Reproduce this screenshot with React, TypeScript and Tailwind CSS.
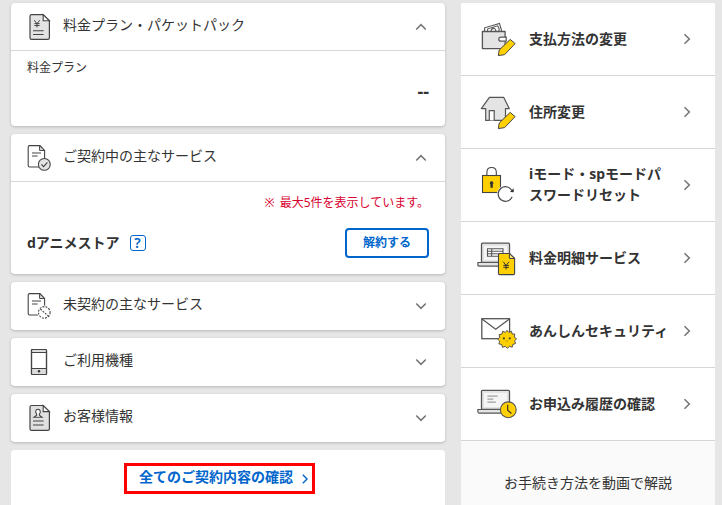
import { useState, type ReactNode } from "react";

const Chevron = ({ className }: { className: string }) => (
  <svg viewBox="0 0 16 16" fill="none" stroke="currentColor" strokeWidth="1.6" className={className} aria-hidden="true">
    <path d="M5.5 3.2 10.3 8l-4.8 4.8" />
  </svg>
);

const Pencil = () => (
  <path d="M21.3 36.6 22.2 31.1 33.2 20.4 38.1 24.6 27.7 35.6Z" fill="#ffd000" stroke="#444" strokeLinejoin="round" />
);

const icon = "h-7 w-6 shrink-0";
const menuIcon = "size-10 shrink-0";

const PlanIcon = () => (
  <svg viewBox="0 0 24 28" fill="none" stroke="#444" className={icon} aria-hidden="true">
    <path d="M4.5 1.7H16.2L22.4 7.8V24.8Q22.4 26.4 20.8 26.4H4.6Q3 26.4 3 24.8V3.3Q3 1.7 4.5 1.7Z" fill="#e4e4e4" strokeWidth="1.2" />
    <path d="M16.2 1.7V7.8H22.4Z" fill="#fff" strokeWidth="1.1" />
    <path d="m7.3 7.2 2.7 3.6 2.7-3.6M10 10.8v3.7M7.4 10.6h5.2M7.4 12.5h5.2" />
    <path d="M6 17.7h10.6M6 21.5h10.6" strokeWidth="1.1" />
  </svg>
);

const DocOutline = () => (
  <>
    <path d="M2.6 1.6H13L17.6 6.4V21.5Q17.6 23 16 23H2.6Q1.2 23 1.2 21.5V3Q1.2 1.6 2.6 1.6Z" fill="#fff" strokeWidth="1.1" />
    <path d="M12.6 1.8V6.5H17.4Z" fill="#e0e0e0" strokeWidth="1" />
    <path d="M5 9h9M5 12h5.6" />
  </>
);

const ContractIcon = () => (
  <svg viewBox="0 0 24 28" fill="none" stroke="#444" className={icon} aria-hidden="true">
    <DocOutline />
    <circle cx="17.3" cy="20.4" r="5.9" fill="#e4e4e4" strokeWidth="1.1" />
    <path d="m14.4 20.3 2.2 2.3 3.8-4.3" strokeWidth="1.1" />
  </svg>
);

const UncontractedIcon = () => (
  <svg viewBox="0 0 24 28" fill="none" stroke="#444" className={icon} aria-hidden="true">
    <DocOutline />
    <circle cx="17.3" cy="20.4" r="5.9" fill="#fff" stroke="#fff" strokeWidth="2" />
    <circle cx="17.3" cy="20.4" r="5.8" strokeWidth="1.1" strokeDasharray="1.9 1.2" />
    <path d="m13.4 17 7.8 7" strokeWidth="1.1" strokeDasharray="1.9 1.2" />
  </svg>
);

const PhoneIcon = () => (
  <svg viewBox="0 0 24 28" fill="none" stroke="#444" className={icon} aria-hidden="true">
    <rect x="4.5" y="1.5" width="15" height="25" rx="1" fill="#fff" strokeWidth="1.2" />
    <path d="M5 2h14v2.4H5zM5 20.6h14V26H5z" fill="#dcdcdc" stroke="none" />
    <path d="M4.5 4.5h15M4.5 20.5h15" />
    <circle cx="12" cy="23.3" r="1.2" fill="#333" stroke="none" />
    <rect x="4.5" y="1.5" width="15" height="25" rx="1" strokeWidth="1.2" />
  </svg>
);

const CustomerIcon = () => (
  <svg viewBox="0 0 24 28" fill="none" stroke="#444" className={icon} aria-hidden="true">
    <path d="M4.5 1.5H16.2L22.4 7.6V24.8Q22.4 26.4 20.8 26.4H4.6Q3 26.4 3 24.8V3Q3 1.5 4.5 1.5Z" fill="#e0e0e0" strokeWidth="1.2" />
    <path d="M16.2 1.5V7.6H22.4Z" fill="#fff" strokeWidth="1.1" />
    <path d="M9.7 10.2Q8.5 8.8 8.7 7.3 9 5.3 11 5.3 13 5.3 13.3 7.3 13.5 8.8 12.3 10.2V11.2L15 13.2H7L9.7 11.2Z" fill="#fff" strokeWidth="1.1" />
    <path d="M6 17h10.6M6 21h10.6" strokeWidth="1.2" />
  </svg>
);

const WalletIcon = () => (
  <svg viewBox="0 0 40 40" fill="none" stroke="#555" className={menuIcon} aria-hidden="true">
    <path d="M7.6 12V8.8L22.5 4.4 24.7 12" fill="#fff" strokeWidth="1.1" />
    <path d="M10.5 12 10.8 9.8 20.7 6.8 22 9.5V12M14 12Q14.5 9 17.3 9.4 19 10 18.9 12" strokeWidth="1.1" />
    <path d="M5.4 12.5H28.1V29.6H5.4Z" fill="#e4e4e4" strokeWidth="1.3" strokeLinejoin="round" />
    <path d="M29.2 18.2H24Q21.8 18.2 21.8 20.2 21.8 22.2 24 22.2H29.2Z" fill="#fff" strokeWidth="1.2" />
    <Pencil />
  </svg>
);

const HouseIcon = () => (
  <svg viewBox="0 0 40 40" fill="none" stroke="#555" className={menuIcon} aria-hidden="true">
    <path d="M12.4 5.4H26.8L32.2 16.6H28.5V28.4H8.7V16.6H4.3Z" fill="#e4e4e4" strokeWidth="1.2" strokeLinejoin="round" />
    <path d="M12.3 28.4V18.6H17.2V28.4" fill="#fff" strokeWidth="1.2" />
    <Pencil />
  </svg>
);

const LockIcon = () => (
  <svg viewBox="0 0 40 40" fill="none" stroke="#444" className={menuIcon} aria-hidden="true">
    <path d="M9.9 10.5V7.2Q9.9 2.5 14.6 2.5 19.3 2.5 19.3 7.2V10.5" strokeWidth="1.1" />
    <rect x="5.5" y="10.5" width="18" height="17" fill="#ffd000" strokeWidth="1.1" />
    <path d="M14.6 16.2a1.9 1.9 0 0 1 1.2 3.3v3.2h-2.4v-3.2a1.9 1.9 0 0 1 1.2-3.3Z" fill="#333" stroke="none" />
    <circle cx="28.4" cy="29" r="8.4" fill="#fff" stroke="none" />
    <path d="M35.2 26.2A7.3 7.3 0 1 0 35.2 31.8" strokeWidth="1.1" />
    <path d="m33 26.9 3.8.4-.2-4Z" fill="#333" stroke="none" />
  </svg>
);

const LaptopBillIcon = () => (
  <svg viewBox="0 0 40 40" fill="none" stroke="#555" className={menuIcon} aria-hidden="true">
    <rect x="4.5" y="5.2" width="28" height="19.3" rx="1" fill="#e4e4e4" strokeWidth="1.3" />
    <path d="M7 8h23v14H7z" fill="#f5f5f5" stroke="none" />
    <path d="M.9 24.5H32V28.2H1.9Q.9 28.2.9 27.2Z" fill="#e4e4e4" strokeWidth="1.2" />
    <path d="M10.5 10.8H26V18.2H10.5ZM10.5 13.3H26M10.5 15.8H26M14.7 10.8V18.2" fill="#fff" strokeWidth="1.1" />
    <path d="M22.5 15.5H32.6L37.6 20.3V35.6Q37.6 36.6 36.6 36.6H22.5Q21.5 36.6 21.5 35.6V16.5Q21.5 15.5 22.5 15.5Z" fill="#ffd000" stroke="#444" strokeWidth="1.1" />
    <path d="M32.4 15.7V20.5H37.4Z" fill="#ffe680" stroke="#444" />
    <path d="m26.2 23.7 2.9 3.8 2.9-3.8M29.1 27.5v4M26.3 27.4h5.6M26.3 29.3h5.6" stroke="#333" />
  </svg>
);

const SecurityIcon = () => (
  <svg viewBox="0 0 40 40" fill="none" stroke="#555" className={menuIcon} aria-hidden="true">
    <rect x="4.8" y="7.7" width="27.8" height="20" fill="#fff" strokeWidth="1.3" />
    <path d="M5 8 18.7 18.2 32.4 8" strokeWidth="1.2" />
    <path
      d="M30 19.3 31.9 21.5 34.5 20.2 35.1 23 37.9 23.1 37.2 26 39.5 27.7 37.6 29.8 38.6 32.5 35.9 33.4 35.2 36.2 32.5 35.4 30.3 37.3 28.3 35.4 25.5 36.3 24.7 33.5 21.9 32.9 22.7 30.1 20.6 28.1 22.8 26.3 22.1 23.5 25 23 25.7 20.2 28.3 21.4Z"
      fill="#ffd000"
      stroke="#555"
      strokeWidth="1"
      strokeLinejoin="round"
    />
    <path d="M26 27.4h1.8M31.8 27.4h1.8" stroke="#333" strokeWidth="1.6" />
    <path d="M28.8 29.8Q30 30.7 31.2 29.8" stroke="#a98700" strokeWidth=".8" />
  </svg>
);

const LaptopClockIcon = () => (
  <svg viewBox="0 0 40 40" fill="none" stroke="#555" className={menuIcon} aria-hidden="true">
    <rect x="4.5" y="6.3" width="28" height="19.2" rx="1" fill="#e4e4e4" strokeWidth="1.3" />
    <path d="M7 9h23v14H7z" fill="#f5f5f5" stroke="none" />
    <path d="M.9 25.5H32V29.2H2.4Q.9 29.2.9 27.7Z" fill="#e4e4e4" strokeWidth="1.2" />
    <path d="M10.4 12.1H20.6M10.4 15.1H16.2M10.4 18.1H18.8" stroke="#888" />
    <circle cx="31.3" cy="25.8" r="7.9" fill="#ffd000" strokeWidth="1.1" />
    <path d="M30.7 20.8V26.3L34.4 29.5" stroke="#333" strokeWidth="1.2" />
  </svg>
);

const menu = [
  { Icon: WalletIcon, label: "支払方法の変更" },
  { Icon: HouseIcon, label: "住所変更" },
  { Icon: LockIcon, label: "iモード・spモードパスワードリセット" },
  { Icon: LaptopBillIcon, label: "料金明細サービス" },
  { Icon: SecurityIcon, label: "あんしんセキュリティ" },
  { Icon: LaptopClockIcon, label: "お申込み履歴の確認" }
];

type SectionProps = {
  Icon: () => ReactNode;
  title: string;
  defaultOpen?: boolean;
  children?: ReactNode;
};

function Section({ Icon, title, defaultOpen = false, children }: SectionProps) {
  const [open, setOpen] = useState(defaultOpen);

  return (
    <section className="rounded-sm bg-white shadow-[0_1px_3px_rgba(0,0,0,0.2)]">
      <h2>
        <button
          type="button"
          aria-expanded={open}
          onClick={() => setOpen(!open)}
          className={`flex h-12 w-full items-center gap-3 px-4 text-left ${open && children ? "border-b border-[#d6d6d6]" : ""}`}
        >
          <Icon />
          <span className="flex-1 pb-1 leading-5">{title}</span>
          <Chevron className={`size-4 text-[#777] ${open ? "-rotate-90" : "rotate-90"}`} />
        </button>
      </h2>
      {open && children}
    </section>
  );
}

export default function App() {
  return (
    <div className="flex min-h-screen gap-4 bg-[#e6e6e6] pt-[3px] pr-[7px] pl-[11px] font-['Noto_Sans','Noto_Sans_CJK_JP',sans-serif] text-sm text-[#333]">
      {/* Contract details */}
      <main className="flex min-w-0 flex-1 flex-col gap-2">
        <Section Icon={PlanIcon} title="料金プラン・パケットパック" defaultOpen>
          <div className="px-4 pt-2 pb-6">
            <h3 className="text-xs leading-[18px]">料金プラン</h3>
            <p className="mt-1 text-right text-lg leading-[21px] font-bold">--</p>
          </div>
        </Section>

        <Section Icon={ContractIcon} title="ご契約中の主なサービス" defaultOpen>
          <div className="px-4 pt-3 pb-4">
            <p className="text-right text-xs leading-[18px] text-[#d7002f]">
              <span className="mr-0.5">※</span> 最大5件を表示しています。
            </p>
            <div className="mt-4 flex items-center justify-between">
              <div className="flex items-center gap-2.5">
                <h3 className="leading-5 font-bold">dアニメストア</h3>
                <button
                  type="button"
                  aria-label="ヘルプ"
                  className="flex size-4 items-center justify-center rounded-[3px] border border-[#0066cc] text-sm leading-3 font-semibold text-[#0066cc]"
                >
                  ?
                </button>
              </div>
              <button
                type="button"
                className="h-[30px] w-[84px] rounded border-2 border-[#0066cc] text-xs leading-4 font-bold text-[#0066cc]"
              >
                解約する
              </button>
            </div>
          </div>
        </Section>

        <Section Icon={UncontractedIcon} title="未契約の主なサービス" />
        <Section Icon={PhoneIcon} title="ご利用機種" />
        <Section Icon={CustomerIcon} title="お客様情報" />

        <div className="flex flex-1 items-start justify-center rounded-t-sm bg-white pt-[13px] pr-[17px]">
          <a
            href="#contracts"
            className="flex items-center gap-[5px] border-3 border-[#ff0000] pl-3 font-bold text-[#0066cc]"
          >
            <span className="pb-1 leading-[21px]">全てのご契約内容の確認</span>
            <Chevron className="size-[14px]" />
          </a>
        </div>
      </main>

      {/* Procedures */}
      <aside className="flex w-[254px] shrink-0 flex-col bg-[#fafafa]">
        <nav>
          <ul>
            {menu.map(({ Icon, label }) => (
              <li key={label} className="border-b border-[#d6d6d6] bg-white">
                <a href="#procedure" className="flex h-[72px] items-center pr-5 pl-4 font-bold">
                  <Icon />
                  <span className="mr-2 ml-3 flex-1 pb-0.5 leading-[21px]">{label}</span>
                  <Chevron className="size-4 text-[#777]" />
                </a>
              </li>
            ))}
          </ul>
        </nav>
        <h2 className="pt-8 text-center leading-5">お手続き方法を動画で解説</h2>
      </aside>
    </div>
  );
}
